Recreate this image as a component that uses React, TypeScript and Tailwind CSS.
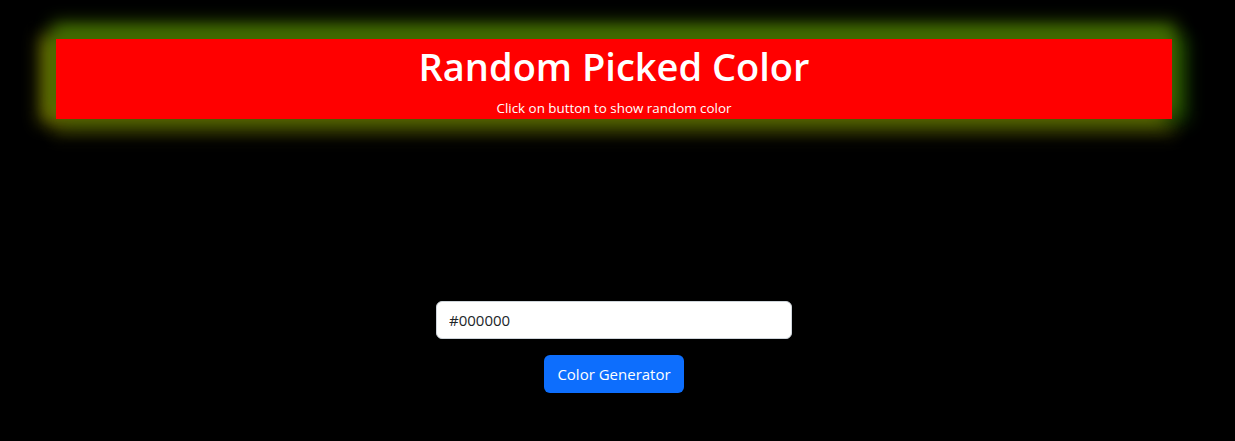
export default function App() {
    return (
        <div className="min-h-[441px] bg-black font-['Open_Sans',sans-serif]">
            <div className="pt-[39px] pl-[56px]">
                <div className="w-[1116px] h-[80px] bg-[#ff0000] text-white flex flex-col items-center shadow-[0_-12px_16px_4px_#3f6b00,-12px_0_16px_4px_#6b6b00,12px_0_16px_4px_#173c00,0_12px_16px_4px_#333300]">
                    <h1 className="text-[38px] leading-[46px] font-semibold mt-[4px]">Random Picked Color</h1>
                    <p className="text-[13.4px] leading-[20px] mt-[9px]">Click on button to show random color</p>
                </div>
            </div>
            <div className="flex flex-col items-center mt-[182px] pr-[7px]">
                <input
                    type="text"
                    readOnly
                    value="#000000"
                    className="w-[356px] h-[38px] bg-white border border-[#ced4da] rounded-[6px] px-[12px] text-[15px] text-[#212529] outline-none"
                />
                <button className="mt-[16px] h-[38px] px-[13px] bg-[#0d6efd] text-white text-[15px] rounded-[6px]">
                    Color Generator
                </button>
            </div>
        </div>
    );
}
